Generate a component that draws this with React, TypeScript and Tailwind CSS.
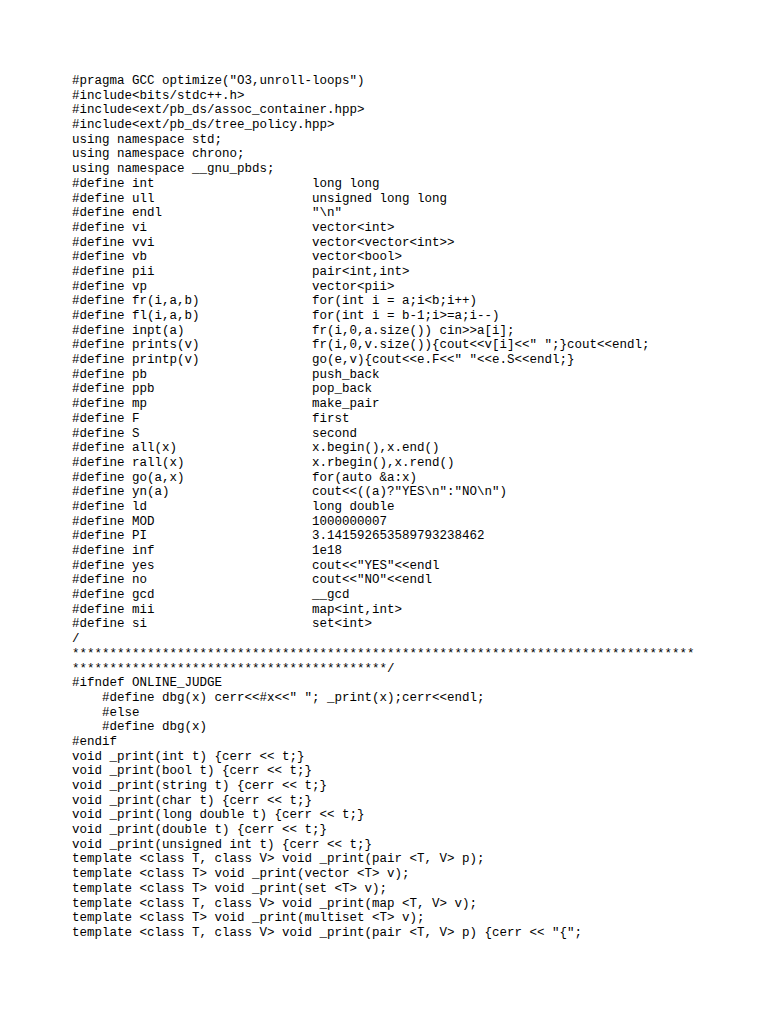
import React from "react";

const defs: [string, string][] = [
  ["int", "long long"],
  ["ull", "unsigned long long"],
  ["endl", '"\\n"'],
  ["vi", "vector<int>"],
  ["vvi", "vector<vector<int>>"],
  ["vb", "vector<bool>"],
  ["pii", "pair<int,int>"],
  ["vp", "vector<pii>"],
  ["fr(i,a,b)", "for(int i = a;i<b;i++)"],
  ["fl(i,a,b)", "for(int i = b-1;i>=a;i--)"],
  ["inpt(a)", "fr(i,0,a.size()) cin>>a[i];"],
  ["prints(v)", 'fr(i,0,v.size()){cout<<v[i]<<" ";}cout<<endl;'],
  ["printp(v)", 'go(e,v){cout<<e.F<<" "<<e.S<<endl;}'],
  ["pb", "push_back"],
  ["ppb", "pop_back"],
  ["mp", "make_pair"],
  ["F", "first"],
  ["S", "second"],
  ["all(x)", "x.begin(),x.end()"],
  ["rall(x)", "x.rbegin(),x.rend()"],
  ["go(a,x)", "for(auto &a:x)"],
  ["yn(a)", 'cout<<((a)?"YES\\n":"NO\\n")'],
  ["ld", "long double"],
  ["MOD", "1000000007"],
  ["PI", "3.141592653589793238462"],
  ["inf", "1e18"],
  ["yes", 'cout<<"YES"<<endl'],
  ["no", 'cout<<"NO"<<endl'],
  ["gcd", "__gcd"],
  ["mii", "map<int,int>"],
  ["si", "set<int>"],
];

const lines: string[] = [
  '#pragma GCC optimize("O3,unroll-loops")',
  "#include<bits/stdc++.h>",
  "#include<ext/pb_ds/assoc_container.hpp>",
  "#include<ext/pb_ds/tree_policy.hpp>",
  "using namespace std;",
  "using namespace chrono;",
  "using namespace __gnu_pbds;",
  ...defs.map(([a, b]) => ("#define " + a).padEnd(32, " ") + b),
  "/",
  "*".repeat(83),
  "*".repeat(42) + "/",
  "#ifndef ONLINE_JUDGE",
  '    #define dbg(x) cerr<<#x<<" "; _print(x);cerr<<endl;',
  "    #else",
  "    #define dbg(x)",
  "#endif",
  "void _print(int t) {cerr << t;}",
  "void _print(bool t) {cerr << t;}",
  "void _print(string t) {cerr << t;}",
  "void _print(char t) {cerr << t;}",
  "void _print(long double t) {cerr << t;}",
  "void _print(double t) {cerr << t;}",
  "void _print(unsigned int t) {cerr << t;}",
  "template <class T, class V> void _print(pair <T, V> p);",
  "template <class T> void _print(vector <T> v);",
  "template <class T> void _print(set <T> v);",
  "template <class T, class V> void _print(map <T, V> v);",
  "template <class T> void _print(multiset <T> v);",
  'template <class T, class V> void _print(pair <T, V> p) {cerr << "{";',
];

export default function App() {
  return (
    <div className="w-[768px] h-[1024px] bg-white overflow-hidden pl-[72px] pt-[74px]">
      <div className="font-['Liberation_Mono',monospace] text-[12.5px] leading-[14.69px] text-black whitespace-pre">
        {lines.map((l, i) => (
          <div key={i}>{l || " "}</div>
        ))}
      </div>
    </div>
  );
}
